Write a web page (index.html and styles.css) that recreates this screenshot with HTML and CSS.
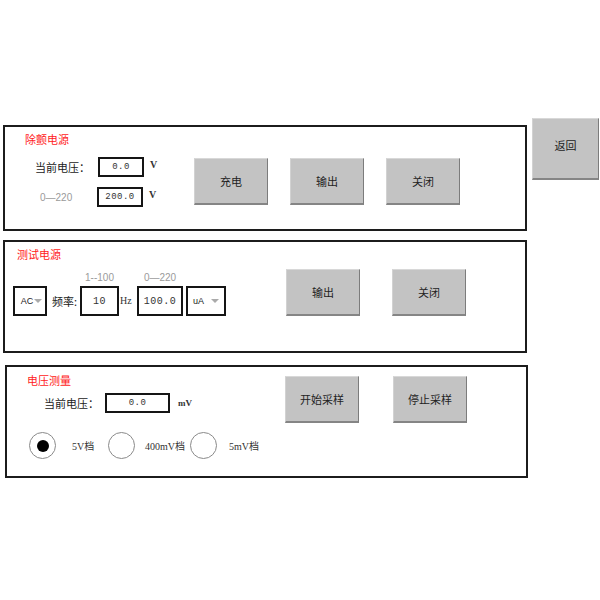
FILE: index.html
```html
<!DOCTYPE html>
<html lang="zh-CN">
<head>
    <meta charset="UTF-8">
    <meta name="viewport" content="width=device-width, initial-scale=1.0">
    <title>电源控制</title>
    <link rel="stylesheet" href="styles.css">
</head>
<body>
    <div class="screen">
        <div class="panels">
            <!-- 除颤电源 -->
            <section class="panel panel-defib">
                <h3 class="panel-title">除颤电源</h3>
                <div class="panel-body">
                    <div class="fields">
                        <div class="field-row">
                            <span class="label">当前电压：</span>
                            <span class="value-box">0.0</span>
                            <span class="unit">V</span>
                        </div>
                        <div class="field-row">
                            <span class="label range">0—220</span>
                            <span class="value-box">200.0</span>
                            <span class="unit">V</span>
                        </div>
                    </div>
                    <div class="actions">
                        <button class="btn">充电</button>
                        <button class="btn">输出</button>
                        <button class="btn">关闭</button>
                    </div>
                </div>
            </section>

            <!-- 测试电源 -->
            <section class="panel panel-test">
                <h3 class="panel-title">测试电源</h3>
                <div class="panel-body">
                    <div class="controls">
                        <div class="select select-ac">AC<span class="arrow"></span></div>
                        <span class="freq-label">频率:</span>
                        <div class="ranged">
                            <span class="range-hint">1--100</span>
                            <span class="value-box box-freq">10</span>
                        </div>
                        <span class="unit unit-hz">Hz</span>
                        <div class="ranged">
                            <span class="range-hint">0—220</span>
                            <span class="value-box box-amp">100.0</span>
                        </div>
                        <div class="select select-unit">uA<span class="arrow"></span></div>
                    </div>
                    <div class="actions">
                        <button class="btn">输出</button>
                        <button class="btn">关闭</button>
                    </div>
                </div>
            </section>

            <!-- 电压测量 -->
            <section class="panel panel-measure">
                <div class="measure-left">
                    <h3 class="panel-title">电压测量</h3>
                    <div class="field-row">
                        <span class="label">当前电压：</span>
                        <span class="value-box box-mv">0.0</span>
                        <span class="unit">mV</span>
                    </div>
                    <div class="radio-row">
                        <label class="radio-item item-5v">
                            <span class="radio checked"></span>
                            <span class="radio-text">5V档</span>
                        </label>
                        <label class="radio-item item-400">
                            <span class="radio"></span>
                            <span class="radio-text">400mV档</span>
                        </label>
                        <label class="radio-item">
                            <span class="radio"></span>
                            <span class="radio-text">5mV档</span>
                        </label>
                    </div>
                </div>
                <div class="actions">
                    <button class="btn">开始采样</button>
                    <button class="btn">停止采样</button>
                </div>
            </section>
        </div>

        <button class="btn btn-back">返回</button>
    </div>
</body>
</html>
```

FILE: styles.css
```css
body {
    margin: 0;
    padding: 0;
    background-color: #ffffff;
    font-family: "Noto Sans CJK SC", "Liberation Sans", sans-serif;
    font-size: 11px;
    color: #222;
}

.screen {
    display: flex;
    align-items: flex-start;
}

.panels {
    margin-top: 125px;
    margin-left: 3px;
    width: 524px;
}

.panel {
    box-sizing: border-box;
    border: 2px solid #1c1c1c;
    background-color: #fff;
}

.panel-title {
    margin: 0;
    font-size: 11px;
    font-weight: normal;
    line-height: 14px;
    color: #ff1a1a;
}

/* buttons */
.btn {
    box-sizing: border-box;
    flex-shrink: 0;
    width: 74px;
    height: 47px;
    padding: 0;
    background-color: #c3c3c3;
    border-top: 1px solid #d8d8d8;
    border-left: 1px solid #d2d2d2;
    border-right: 1px solid #7c7c7c;
    border-bottom: 2px solid #858585;
    font-family: "Noto Sans CJK SC", sans-serif;
    font-size: 11px;
    color: #222;
    cursor: pointer;
}

.btn-back {
    width: 67px;
    height: 62px;
    margin-top: 118px;
    margin-left: 5px;
    padding-bottom: 8px;
}

/* inputs */
.value-box {
    box-sizing: border-box;
    display: flex;
    flex-shrink: 0;
    align-items: center;
    justify-content: center;
    width: 46px;
    height: 20px;
    border: 2px solid #151515;
    background-color: #fff;
    font-family: "Liberation Mono", monospace;
    font-size: 9px;
    letter-spacing: 0.5px;
    color: #333;
}

.unit {
    white-space: nowrap;
    font-family: "Liberation Serif", serif;
    font-size: 10px;
    font-weight: bold;
    color: #333;
}

.label {
    flex-shrink: 0;
    width: 63px;
    white-space: nowrap;
}

.range,
.range-hint {
    color: #9a9a9a;
    font-family: "Liberation Sans", sans-serif;
    font-size: 10px;
    white-space: nowrap;
}

.field-row {
    display: flex;
    align-items: center;
}

.actions {
    display: flex;
    align-items: flex-start;
}

/* 除颤电源 */
.panel-defib {
    height: 106px;
    padding-top: 5px;
}

.panel-defib .panel-title {
    padding-left: 20px;
}

.panel-defib .panel-body {
    display: flex;
    margin-top: 11px;
    padding-left: 30px;
}

.fields {
    display: flex;
    flex-direction: column;
    gap: 10px;
    width: 124px;
}

.fields .unit {
    margin-left: 6px;
    margin-top: -6px;
}

.fields .range {
    width: 57px;
    padding-left: 5px;
}

.panel-defib .actions {
    margin-left: 35px;
    margin-top: 1px;
    gap: 22px;
}

/* 测试电源 */
.panel-test {
    height: 113px;
    margin-top: 9px;
    padding-top: 5px;
}

.panel-test .panel-title {
    padding-left: 12px;
}

.panel-test .panel-body {
    display: flex;
    margin-top: 7px;
    padding-left: 8px;
}

.controls {
    display: flex;
    flex-shrink: 0;
    align-items: flex-end;
}

.ranged {
    display: flex;
    flex-shrink: 0;
    flex-direction: column;
    align-items: center;
    gap: 2px;
}

.range-hint {
    line-height: 12px;
}

.select {
    box-sizing: border-box;
    display: flex;
    flex-shrink: 0;
    align-items: center;
    justify-content: center;
    height: 30px;
    border: 2px solid #151515;
    font-family: "Liberation Sans", sans-serif;
    font-size: 9px;
    color: #222;
}

.select-ac {
    width: 34px;
    padding-left: 3px;
}

.select-unit {
    width: 40px;
    margin-left: 3px;
    gap: 6px;
}

.arrow {
    width: 0;
    height: 0;
    margin-left: 1px;
    border-left: 4px solid transparent;
    border-right: 4px solid transparent;
    border-top: 4px solid #aaa;
}

.freq-label {
    flex-shrink: 0;
    width: 25px;
    margin-left: 5px;
    margin-right: 3px;
    line-height: 30px;
    white-space: nowrap;
}

.panel-test .value-box {
    height: 30px;
    font-size: 10px;
}

.box-freq {
    width: 39px;
}

.box-amp {
    width: 46px;
}

.unit-hz {
    flex-shrink: 0;
    width: 11px;
    margin-left: 1px;
    margin-right: 6px;
    line-height: 30px;
    font-weight: normal;
}

.panel-test .actions {
    margin-left: 60px;
    margin-top: 1px;
    gap: 32px;
}

/* 电压测量 */
.panel-measure {
    display: flex;
    align-items: flex-start;
    width: 523px;
    height: 113px;
    margin-top: 12px;
    margin-left: 2px;
}

.measure-left {
    flex-shrink: 0;
    width: 258px;
    padding-top: 6px;
}

.measure-left .panel-title {
    padding-left: 20px;
}

.measure-left .field-row {
    margin-top: 6px;
    padding-left: 37px;
}

.measure-left .label {
    width: 61px;
}

.box-mv {
    width: 65px;
}

.measure-left .unit {
    margin-left: 8px;
    font-size: 9px;
}

.radio-row {
    display: flex;
    align-items: center;
    margin-top: 19px;
    padding-left: 22px;
}

.radio-item {
    display: flex;
    flex-shrink: 0;
    align-items: center;
    gap: 12px;
}

.item-5v {
    width: 79px;
}

.radio-item.item-5v .radio-text {
    margin-left: 4px;
}

.item-400 {
    width: 82px;
    gap: 10px;
}

.radio {
    box-sizing: border-box;
    display: flex;
    flex-shrink: 0;
    align-items: center;
    justify-content: center;
    width: 27px;
    height: 27px;
    border: 1px solid #8a8a8a;
    border-radius: 50%;
    background-color: #fff;
}

.radio.checked::after {
    content: "";
    width: 12px;
    height: 12px;
    border-radius: 50%;
    background-color: #000;
}

.radio-text {
    white-space: nowrap;
    font-family: "Liberation Serif", "Noto Sans CJK SC", serif;
    font-size: 10px;
    color: #333;
}

.panel-measure .actions {
    margin-top: 9px;
    margin-left: 20px;
    gap: 34px;
}
```
